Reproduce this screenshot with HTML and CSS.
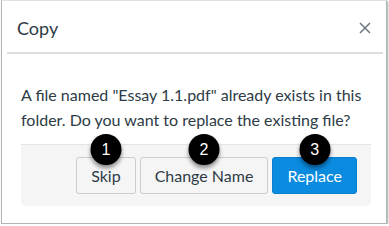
FILE: index.html
```html
<!DOCTYPE html>
<html>
<head>
<meta charset="utf-8">
<link rel="stylesheet" href="styles.css">
</head>
<body>
<div class="dialog">
  <div class="header">
    <span class="title">Copy</span>
    <svg class="close" width="12" height="12" viewBox="0 0 12 12"><path d="M1 1L11 11M11 1L1 11" stroke="#6b7780" stroke-width="1.5" fill="none"/></svg>
  </div>
  <div class="rule"></div>
  <div class="body">
    <p class="msg">A file named "Essay 1.1.pdf" already exists in this folder. Do you want to replace the existing file?</p>
    <div class="footer">
      <button class="btn">Skip<span class="badge">1</span></button>
      <button class="btn">Change Name<span class="badge">2</span></button>
      <button class="btn primary">Replace<span class="badge">3</span></button>
    </div>
  </div>
</div>
</body>
</html>
```
FILE: styles.css
```css
html, body { margin: 0; padding: 0; background: #fff; }
body { font-family: Lato, "Open Sans", sans-serif; color: #2d3b45; }
.dialog {
  margin-left: 1px;
  width: 386px;
  height: 224px;
  border: 1px solid #b4b4b4;
  border-top-color: #e0e0e0;
  box-shadow: 1px 1px 2px rgba(0,0,0,0.35);
  box-sizing: border-box;
  background: #fff;
}
.header {
  height: 51px;
  display: flex;
  align-items: center;
  justify-content: space-between;
  padding: 0 15px 0 15px;
  box-sizing: border-box;
}
.title { font-size: 18px; line-height: 1; padding-top: 2px; }
.close { display: block; margin-top: 3px; }
.rule { margin: 0 3px 0 5px; height: 2px; background: #d9dde0; }
.body { padding: 28px 15px 0 19px; }
.msg { margin: 0; font-size: 16px; line-height: 25px; }
.footer {
  margin-top: 12px;
  height: 62px;
  box-sizing: border-box;
  border-top: 1px solid #e2e4e6;
  background: #f5f5f5;
  border-radius: 0 0 5px 5px;
  display: flex;
  justify-content: flex-end;
  align-items: flex-start;
  gap: 4px;
  padding: 12px 14px 0 0;
}
.btn {
  position: relative;
  height: 37px;
  padding: 0 14px;
  font-family: Lato, "Open Sans", sans-serif;
  font-size: 16px;
  color: #2d3b45;
  background: #f5f5f5;
  border: 1px solid #c7cdd1;
  border-radius: 3px;
}
.btn.primary { background: #0a8be0; border-color: #0a7fd0; color: #fff; }
.badge {
  position: absolute;
  top: -24px;
  left: 50%;
  transform: translateX(-50%);
  width: 31px;
  height: 31px;
  border-radius: 50%;
  background: #000;
  color: #fff;
  font-family: "Liberation Sans", Arial, sans-serif;
  font-size: 16px;
  line-height: 31px;
  text-align: center;
  box-shadow: 0 3px 4px rgba(0,0,0,0.45);
}
```
